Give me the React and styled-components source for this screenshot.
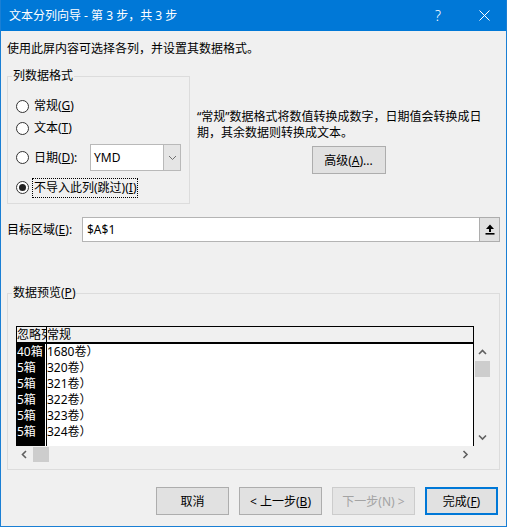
import styled, { createGlobalStyle } from "styled-components";

const GlobalStyle = createGlobalStyle`
  html, body {
    margin: 0;
    padding: 0;
    background: #f0f0f0;
  }
  body {
    font-family: "Noto Sans", "Noto Sans CJK SC", sans-serif;
    font-size: 12px;
    color: #000;
  }
  * {
    box-sizing: border-box;
  }
`;

const rows = [
  ["40箱", "1680卷）"],
  ["5箱", "320卷）"],
  ["5箱", "321卷）"],
  ["5箱", "322卷）"],
  ["5箱", "323卷）"],
  ["5箱", "324卷）"],
];

function Radio({ checked, children, focused }) {
  return (
    <RadioLabel>
      <Circle $checked={checked} />
      <RadioText $focused={focused}>{children}</RadioText>
    </RadioLabel>
  );
}

function Chevron({ dir }) {
  const points = {
    up: "1,5 4.5,1.5 8,5",
    down: "1,1.5 4.5,5 8,1.5",
    left: "5,1 1.5,4.5 5,8",
    right: "1.5,1 5,4.5 1.5,8",
  }[dir];
  const vertical = dir === "up" || dir === "down";
  return (
    <svg width={vertical ? 9 : 7} height={vertical ? 7 : 9} viewBox={vertical ? "0 0 9 7" : "0 0 7 9"}>
      <polyline points={points} fill="none" stroke="#606060" strokeWidth="1.6" />
    </svg>
  );
}

export default function App() {
  return (
    <>
      <GlobalStyle />
      <Window>
        <TitleBar>
          <Title>文本分列向导 - 第 3 步，共 3 步</Title>
          <TitleButton>?</TitleButton>
          <TitleButton>
            <svg width="11" height="11" viewBox="0 0 11 11">
              <path d="M0.5 0.5 L10.5 10.5 M10.5 0.5 L0.5 10.5" stroke="#fff" strokeWidth="1" />
            </svg>
          </TitleButton>
        </TitleBar>

        <Body>
          <Line>使用此屏内容可选择各列，并设置其数据格式。</Line>

          <TopRow>
            <FormatGroup>
              <Legend>列数据格式</Legend>
              <OptionRow $h={22}>
                <Radio>常规(<u>G</u>)</Radio>
              </OptionRow>
              <OptionRow $h={22}>
                <Radio>文本(<u>T</u>)</Radio>
              </OptionRow>
              <OptionRow $h={27} $mt={5}>
                <Radio>日期(<u>D</u>):</Radio>
                <Combo>
                  <ComboText>YMD</ComboText>
                  <ComboButton>
                    <svg width="9" height="6" viewBox="0 0 9 6">
                      <polyline points="1,1 4.5,4.5 8,1" fill="none" stroke="#707070" strokeWidth="1" />
                    </svg>
                  </ComboButton>
                </Combo>
              </OptionRow>
              <OptionRow $h={19} $mt={7}>
                <Radio checked focused>
                  不导入此列(跳过)(<u>I</u>)
                </Radio>
              </OptionRow>
            </FormatGroup>

            <Description>
              <Line>
                “常规”数据格式将数值转换成数字，日期值会转换成日
                <br />
                期，其余数据则转换成文本。
              </Line>
              <Button $w={74}>
                高级(<u>A</u>)...
              </Button>
            </Description>
          </TopRow>

          <TargetRow>
            <TargetLabel>
              目标区域(<u>E</u>):
            </TargetLabel>
            <TargetInput>
              <InputText>$A$1</InputText>
              <CollapseButton>
                <svg width="10" height="11" viewBox="0 0 10 11">
                  <path d="M5 0.5 L9 5 L6 5 L6 8 L4 8 L4 5 L1 5 Z" fill="#000" />
                  <rect x="0.5" y="9" width="9" height="1.6" fill="#000" />
                </svg>
              </CollapseButton>
            </TargetInput>
          </TargetRow>

          <PreviewGroup>
            <Legend>
              数据预览(<u>P</u>)
            </Legend>
            <PreviewGrid>
              <HeaderRow>
                <HeaderCell $w={30}>忽略列</HeaderCell>
                <HeaderCell>常规</HeaderCell>
              </HeaderRow>
              <DataArea>
                <SkippedColumn>
                  {rows.map((r, i) => (
                    <Cell key={i}>{r[0]}</Cell>
                  ))}
                </SkippedColumn>
                <DataColumn>
                  {rows.map((r, i) => (
                    <Cell key={i}>{r[1]}</Cell>
                  ))}
                </DataColumn>
              </DataArea>
              <VScroll>
                <ArrowBox>
                  <Chevron dir="up" />
                </ArrowBox>
                <Thumb $vertical />
                <Spacer />
                <ArrowBox>
                  <Chevron dir="down" />
                </ArrowBox>
              </VScroll>
              <HScroll>
                <ArrowBox>
                  <Chevron dir="left" />
                </ArrowBox>
                <Thumb />
                <Spacer />
                <ArrowBox>
                  <Chevron dir="right" />
                </ArrowBox>
              </HScroll>
            </PreviewGrid>
          </PreviewGroup>

          <Footer>
            <Button $w={73}>取消</Button>
            <Button $w={83}>
              &lt; 上一步(<u>B</u>)
            </Button>
            <Button $w={83} disabled>
              下一步(N) &gt;
            </Button>
            <Button $w={73} $default>
              完成(<u>F</u>)
            </Button>
          </Footer>
        </Body>
      </Window>
    </>
  );
}

const Window = styled.div`
  width: 507px;
  height: 527px;
  display: flex;
  flex-direction: column;
  background: #f0f0f0;
  border: 1px solid #1a7fd4;
  border-top: none;
  overflow: hidden;
`;

const TitleBar = styled.div`
  height: 31px;
  flex-shrink: 0;
  display: flex;
  align-items: center;
  background: #0078d7;
  color: #fff;
  margin: 0 -1px;
  padding-left: 9px;
`;

const Title = styled.div`
  flex: 1;
  font-size: 12px;
  line-height: 16px;
`;

const TitleButton = styled.div`
  width: 46px;
  height: 31px;
  display: flex;
  align-items: center;
  justify-content: center;
  font-size: 14px;
  font-family: "Noto Sans", sans-serif;
  font-weight: 300;
`;

const Body = styled.div`
  flex: 1;
  display: flex;
  flex-direction: column;
  padding: 10px 6px 0 6px;
`;

const Line = styled.div`
  line-height: 16px;
  white-space: nowrap;
`;

const TopRow = styled.div`
  display: flex;
  align-items: flex-start;
  margin-top: 11px;
`;

const Group = styled.fieldset`
  margin: 0;
  border: 1px solid #dcdcdc;
  min-width: 0;
`;

const FormatGroup = styled(Group)`
  width: 183px;
  padding: 11px 8px 6px 8px;
`;

const Legend = styled.legend`
  margin-left: -4px;
  padding: 0 1px;
  line-height: 16px;
`;

const OptionRow = styled.div`
  height: ${(p) => p.$h}px;
  margin-top: ${(p) => p.$mt || 0}px;
  display: flex;
  align-items: center;
  justify-content: space-between;
`;

const RadioLabel = styled.div`
  display: flex;
  align-items: center;
`;

const Circle = styled.span`
  width: 13px;
  height: 13px;
  border-radius: 50%;
  border: 1px solid #333;
  background: #fff;
  display: flex;
  align-items: center;
  justify-content: center;
  margin-right: 4px;
  &::after {
    content: "";
    display: ${(p) => (p.$checked ? "block" : "none")};
    width: 7px;
    height: 7px;
    border-radius: 50%;
    background: #222;
  }
`;

const RadioText = styled.span`
  line-height: 16px;
  padding: 1px 0 1px 1px;
  outline: ${(p) => (p.$focused ? "1px dotted #000" : "none")};
  white-space: nowrap;
`;

const Combo = styled.div`
  width: 91px;
  height: 27px;
  display: flex;
  background: #fff;
  border: 1px solid #b9b9b9;
`;

const ComboText = styled.div`
  flex: 1;
  display: flex;
  align-items: center;
  padding-left: 3px;
`;

const ComboButton = styled.div`
  width: 17px;
  display: flex;
  align-items: center;
  justify-content: center;
  background: #e5e5e5;
  border-left: 1px solid #b9b9b9;
`;

const Description = styled.div`
  flex: 1;
  margin-left: 7px;
  padding-top: 41px;
  display: flex;
  flex-direction: column;
  align-items: flex-start;
  & > button {
    align-self: center;
    margin-top: 5px;
  }
`;

const Button = styled.button`
  width: ${(p) => p.$w}px;
  height: 28px;
  padding: 0;
  font: inherit;
  font-size: 12px;
  color: ${(p) => (p.disabled ? "#a3a3a3" : "#000")};
  background: ${(p) => (p.disabled ? "#e4e4e4" : "#e1e1e1")};
  border: ${(p) =>
    p.$default ? "2px solid #0078d7" : p.disabled ? "1px solid #cccccc" : "1px solid #adadad"};
  white-space: nowrap;
`;

const TargetRow = styled.div`
  display: flex;
  align-items: center;
  margin-top: 13px;
`;

const TargetLabel = styled.div`
  width: 75px;
  line-height: 16px;
  white-space: nowrap;
`;

const TargetInput = styled.div`
  flex: 1;
  height: 25px;
  display: flex;
  background: #fff;
  border: 1px solid #b4b4b4;
`;

const InputText = styled.div`
  flex: 1;
  display: flex;
  align-items: center;
  padding-left: 4px;
`;

const CollapseButton = styled.div`
  width: 21px;
  margin: -1px -1px -1px 0;
  display: flex;
  align-items: center;
  justify-content: center;
  background: #e1e1e1;
  border: 1px solid #adadad;
`;

const PreviewGroup = styled(Group)`
  margin-top: 43px;
  padding: 25px 8px 6px 8px;
`;

const PreviewGrid = styled.div`
  display: grid;
  grid-template-columns: 1fr 17px;
  grid-template-rows: 18px 102px 17px;
`;

const HeaderRow = styled.div`
  grid-column: 1;
  grid-row: 1;
  display: flex;
  background: #f0f0f0;
  border: 1px solid #000;
  border-bottom-width: 2px;
  overflow: hidden;
`;

const HeaderCell = styled.div`
  ${(p) => (p.$w ? `width: ${p.$w}px; border-right: 1px solid #000;` : "flex: 1;")}
  flex-shrink: 0;
  line-height: 15px;
  white-space: nowrap;
  overflow: hidden;
`;

const DataArea = styled.div`
  grid-column: 1;
  grid-row: 2;
  display: flex;
  background: #fff;
  border-left: 1px solid #000;
  border-right: 1px solid #000;
  overflow: hidden;
`;

const SkippedColumn = styled.div`
  width: 28px;
  background: #000;
  color: #fff;
`;

const DataColumn = styled.div`
  flex: 1;
  margin-left: 1px;
  border-left: 1px solid #000;
`;

const Cell = styled.div`
  height: 16px;
  line-height: 16px;
  white-space: nowrap;
  overflow: hidden;
`;

const Scroll = styled.div`
  display: flex;
  background: #f0f0f0;
`;

const VScroll = styled(Scroll)`
  grid-column: 2;
  grid-row: 2;
  flex-direction: column;
  align-items: center;
`;

const HScroll = styled(Scroll)`
  grid-column: 1;
  grid-row: 3;
  align-items: center;
`;

const ArrowBox = styled.div`
  width: 17px;
  height: 17px;
  flex-shrink: 0;
  display: flex;
  align-items: center;
  justify-content: center;
`;

const Thumb = styled.div`
  background: #cdcdcd;
  width: ${(p) => (p.$vertical ? 15 : 16)}px;
  height: ${(p) => (p.$vertical ? 16 : 15)}px;
`;

const Spacer = styled.div`
  flex: 1;
`;

const Footer = styled.div`
  display: flex;
  justify-content: flex-end;
  gap: 10px;
  margin-top: 17px;
  padding-right: 2px;
`;
